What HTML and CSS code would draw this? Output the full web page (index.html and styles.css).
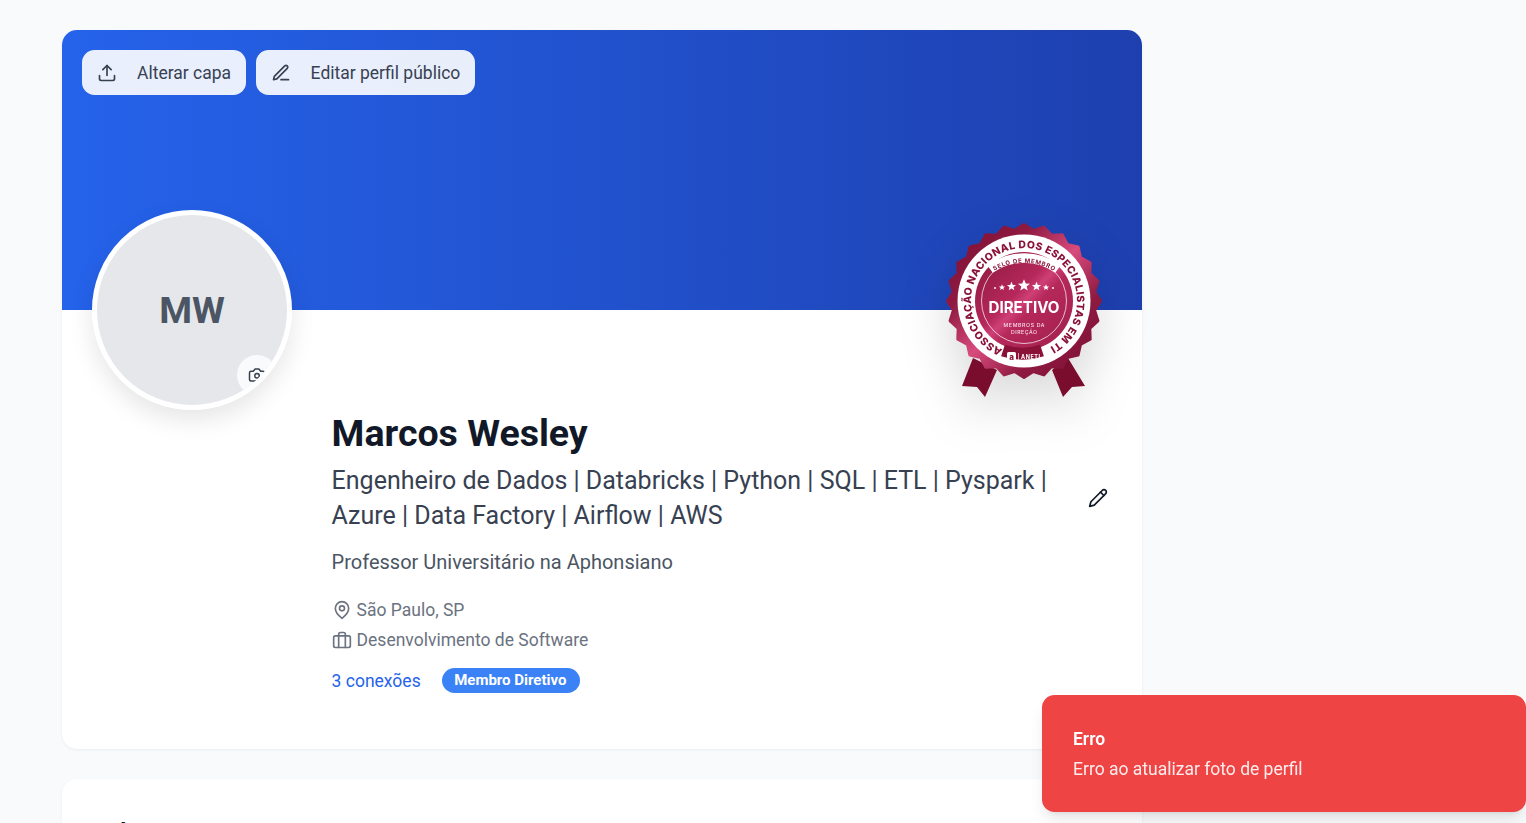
FILE: index.html
```html
<!DOCTYPE html>
<html lang="pt-BR">
<head>
<meta charset="utf-8">
<title>Marcos Wesley</title>
<link rel="stylesheet" href="styles.css">
</head>
<body>
<main class="page">
  <section class="card profile">
    <div class="cover">
      <div class="cover-actions">
        <button class="cover-btn">
          <svg class="icon" viewBox="0 0 24 24"><path d="M21 15v4a2 2 0 0 1-2 2H5a2 2 0 0 1-2-2v-4"/><polyline points="17 8 12 3 7 8"/><line x1="12" y1="3" x2="12" y2="15"/></svg>
          <span>Alterar capa</span>
        </button>
        <button class="cover-btn">
          <svg class="icon" viewBox="0 0 24 24"><path d="M12 20h9"/><path d="M16.5 3.5a2.12 2.12 0 0 1 3 3L7 19l-4 1 1-4Z"/></svg>
          <span>Editar perfil público</span>
        </button>
      </div>
    </div>

    <div class="avatar">
      <span class="initials">MW</span>
      <span class="avatar-cam">
        <svg class="icon cam-icon" viewBox="0 0 24 24"><path d="M14.5 4h-5L7 7H4a2 2 0 0 0-2 2v9a2 2 0 0 0 2 2h16a2 2 0 0 0 2-2V9a2 2 0 0 0-2-2h-3l-2.5-3z"/><circle cx="12" cy="13" r="3"/></svg>
      </span>
    </div>

    <svg class="seal" viewBox="-80 -80 160 180">
      <defs>
        <linearGradient id="sheen" x1="0" y1="0" x2="1" y2="1">
          <stop offset="0" stop-color="#7a0e31"/>
          <stop offset=".28" stop-color="#8f1a41"/>
          <stop offset=".5" stop-color="#d84b7d"/>
          <stop offset=".72" stop-color="#8f1a41"/>
          <stop offset="1" stop-color="#7a0e31"/>
        </linearGradient>
        <linearGradient id="disc" x1="0" y1="0" x2="1" y2="1">
          <stop offset="0" stop-color="#8a173d"/>
          <stop offset=".42" stop-color="#b5285a"/>
          <stop offset=".5" stop-color="#cf4076"/>
          <stop offset=".58" stop-color="#b5285a"/>
          <stop offset="1" stop-color="#a01f4c"/>
        </linearGradient>
        <path id="ringPath" d="M-21.6 48.4A53 53 0 1 1 24.9 46.8"/>
        <path id="seloPath" d="M-31.5 -32A58 58 0 0 1 31.5 -32"/>
        <polygon id="star" points="0,-5 1.4,-1.7 4.8,-1.5 2.1,.7 3,4 0,2.1 -3,4 -2.1,.7 -4.8,-1.5 -1.4,-1.7"/>
      </defs>
      <polygon class="tail" points="-51,54 -27,66 -39,93 -47,83 -62,82"/>
      <polygon class="tail" points="44,54 28,66 39,93 48,83 61,82"/>
      <g class="seal-body">
        <polygon class="rim" points="76.5,0 70.6,9.3 73.9,19.8 65.8,27.3 66.2,38.2 56.5,43.3 54.1,54.1 43.3,56.5 38.2,66.2 27.3,65.8 19.8,73.9 9.3,70.6 0,76.5 -9.3,70.6 -19.8,73.9 -27.3,65.8 -38.2,66.2 -43.3,56.5 -54.1,54.1 -56.5,43.3 -66.2,38.2 -65.8,27.3 -73.9,19.8 -70.6,9.3 -76.5,0 -70.6,-9.3 -73.9,-19.8 -65.8,-27.3 -66.2,-38.2 -56.5,-43.3 -54.1,-54.1 -43.3,-56.5 -38.2,-66.2 -27.3,-65.8 -19.8,-73.9 -9.3,-70.6 0,-76.5 9.3,-70.6 19.8,-73.9 27.3,-65.8 38.2,-66.2 43.3,-56.5 54.1,-54.1 56.5,-43.3 66.2,-38.2 65.8,-27.3 73.9,-19.8 70.6,-9.3"/>
        <circle class="ring" r="66.5"/>
        <circle class="disc" r="49"/>
        <circle class="disc-line" r="42.5"/>
        <text class="ring-text"><textPath href="#ringPath" textLength="283" lengthAdjust="spacing">ASSOCIAÇÃO NACIONAL DOS ESPECIALISTAS EM TI</textPath></text>
      </g>
      <path class="selo-band" d="M-34 -35A58 58 0 0 1 34 -35"/>
      <text class="selo-text"><textPath href="#seloPath" textLength="62" lengthAdjust="spacing" startOffset="2.3">SELO DE MEMBRO</textPath></text>
      <use href="#star" class="star" transform="translate(0 -18.5) scale(1.25)"/>
      <use href="#star" class="star" transform="translate(-12.5 -17.5) scale(.95)"/>
      <use href="#star" class="star" transform="translate(12.5 -17.5) scale(.95)"/>
      <use href="#star" class="star" transform="translate(-22 -16.5) scale(.65)"/>
      <use href="#star" class="star" transform="translate(22 -16.5) scale(.65)"/>
      <circle class="star" cx="-29" cy="-16" r=".9"/>
      <circle class="star" cx="29" cy="-16" r=".9"/>
      <text class="seal-title" text-anchor="middle" y="9" textLength="71" lengthAdjust="spacingAndGlyphs">DIRETIVO</text>
      <text class="seal-small" text-anchor="middle" y="23" textLength="41" lengthAdjust="spacing">MEMBROS DA</text>
      <text class="seal-small" text-anchor="middle" y="30" textLength="26" lengthAdjust="spacing">DIREÇÃO</text>
      <path class="logo-band" d="M-21 46.5Q-1.5 53 18 46.5"/>
      <rect class="logo-mark" x="-17" y="48" width="9" height="9" rx="1.5"/>
      <text class="logo-a" x="-12.5" y="55.5" text-anchor="middle">a</text>
      <rect class="logo-mark" x="-5.6" y="49" width=".6" height="7"/>
      <text class="logo-text" x="-3" y="54.5" textLength="19" lengthAdjust="spacing">ANETI</text>
    </svg>

    <div class="info">
      <h1 class="name">Marcos Wesley</h1>
      <div class="headline-row">
        <p class="headline">Engenheiro de Dados | Databricks | Python | SQL | ETL | Pyspark | Azure | Data Factory | Airflow | AWS</p>
        <svg class="icon edit-icon" viewBox="0 0 24 24"><path d="M17 3a2.85 2.83 0 1 1 4 4L7.5 20.5 2 22l1.5-5.5Z"/><path d="m15 5 4 4"/></svg>
      </div>
      <p class="role">Professor Universitário na Aphonsiano</p>
      <ul class="meta">
        <li class="meta-item">
          <svg class="icon meta-icon" viewBox="0 0 24 24"><path d="M20 10c0 6-8 12-8 12s-8-6-8-12a8 8 0 0 1 16 0Z"/><circle cx="12" cy="10" r="3"/></svg>
          <span>São Paulo, SP</span>
        </li>
        <li class="meta-item">
          <svg class="icon meta-icon" viewBox="0 0 24 24"><rect x="2" y="7" width="20" height="14" rx="2"/><path d="M16 21V5a2 2 0 0 0-2-2h-4a2 2 0 0 0-2 2v16"/></svg>
          <span>Desenvolvimento de Software</span>
        </li>
      </ul>
      <div class="links">
        <a class="connections" href="#">3 conexões</a>
        <span class="pill">Membro Diretivo</span>
      </div>
    </div>
  </section>

  <section class="card about">
    <h2 class="about-title">Sobre</h2>
  </section>
</main>

<aside class="toast">
  <strong class="toast-title">Erro</strong>
  <span class="toast-text">Erro ao atualizar foto de perfil</span>
</aside>
</body>
</html>
```

FILE: styles.css
```css
* { box-sizing: border-box; }

html, body {
  margin: 0;
  height: 823px;
  overflow: hidden;
  background: #f9fafb;
  font-family: Roboto, "Liberation Sans", sans-serif;
}

.page {
  width: 1080px;
  margin-left: 62px;
  padding-top: 30px;
  display: flex;
  flex-direction: column;
  gap: 30px;
}

.card {
  background: #fff;
  border-radius: 15px;
  box-shadow: 0 1px 3px rgba(0, 0, 0, .06);
}

.profile { position: relative; }

.cover {
  height: 280px;
  padding: 20px;
  border-radius: 15px 15px 0 0;
  background: linear-gradient(to right, #2563eb, #1e40af);
}

.cover-actions { display: flex; gap: 10px; }

.cover-btn {
  display: flex;
  align-items: center;
  gap: 20px;
  height: 45px;
  padding: 0 14.5px 0 15px;
  border: 0;
  border-radius: 12.5px;
  background: rgba(255, 255, 255, .9);
  color: #374151;
  font: 400 17.5px Roboto, sans-serif;
}

.icon {
  flex: none;
  width: 20px;
  height: 20px;
  fill: none;
  stroke: currentColor;
  stroke-width: 2;
  stroke-linecap: round;
  stroke-linejoin: round;
}

.avatar {
  position: absolute;
  left: 30px;
  top: 180px;
  width: 200px;
  height: 200px;
  border: 5px solid #fff;
  border-radius: 50%;
  overflow: hidden;
  background: #e5e7eb;
  display: flex;
  align-items: center;
  justify-content: center;
}

.profile::before {
  content: "";
  position: absolute;
  left: 30px;
  top: 180px;
  width: 200px;
  height: 200px;
  border-radius: 50%;
  box-shadow: 0 10px 25px rgba(0, 0, 0, .1);
}

.initials {
  color: #4b5563;
  font-size: 37.5px;
  font-weight: 700;
}

.avatar-cam {
  position: absolute;
  left: 140px;
  top: 140px;
  width: 40px;
  height: 40px;
  border-radius: 50%;
  background: #f9fafb;
  color: #374151;
  display: flex;
  align-items: center;
  justify-content: center;
}

.cam-icon { width: 18px; height: 18px; }

.seal {
  position: absolute;
  left: 882px;
  top: 194px;
  width: 160px;
  height: 180px;
  overflow: visible;
  filter: blur(.3px) drop-shadow(0 20px 25px rgba(0, 0, 0, .15));
}

.seal-body { transform: translateY(-3px); }
.tail { fill: #7a0c2e; }
.rim { fill: url(#sheen); stroke: url(#sheen); stroke-width: 3; stroke-linejoin: round; }
.ring { fill: #fff; }
.disc { fill: url(#disc); }
.disc-line { fill: none; stroke: #fff; stroke-width: .7; }
.ring-text { fill: #8a1238; font: 800 10.4px Inter, "Open Sans", sans-serif; }
.selo-band { fill: none; stroke: #fff; stroke-width: 9.5; }
.selo-text { fill: #8a1238; font: 700 6px Inter, "Open Sans", sans-serif; }
.star { fill: #fff; }
.seal-title { fill: #fff; font: 700 15.5px Inter, "Open Sans", sans-serif; }
.seal-small { fill: #fbdde8; font: 500 5.2px Inter, "Open Sans", sans-serif; }
.logo-band { fill: none; stroke: #8a1238; stroke-width: 12; }
.logo-mark { fill: #fff; }
.logo-a { fill: #8a1238; font: 800 8px Inter, sans-serif; }
.logo-text { fill: #fff; font: 700 5.5px Inter, sans-serif; }

.info { padding: 101px 32px 56px 269.6px; }

.name {
  margin: 0;
  color: #111827;
  font-size: 37.5px;
  line-height: 45px;
  font-weight: 700;
}

.headline-row {
  display: flex;
  align-items: center;
  gap: 40px;
  margin-top: 6.5px;
}

.headline {
  flex: 1;
  margin: 0;
  color: #374151;
  font-size: 25px;
  line-height: 35px;
}

.edit-icon { color: #111827; margin-right: 2px; }

.role {
  margin: 15.5px 0 0;
  color: #4b5563;
  font-size: 20px;
  line-height: 28px;
}

.meta {
  list-style: none;
  margin: 19px 0 0;
  padding: 0;
}

.meta-item {
  display: flex;
  align-items: center;
  gap: 5px;
  height: 30px;
  color: #6b7280;
  font-size: 17.5px;
}

.links {
  display: flex;
  align-items: center;
  gap: 21px;
  margin-top: 13px;
  height: 25px;
}

.connections {
  color: #2563eb;
  font-size: 17.5px;
  text-decoration: none;
}

.pill {
  display: flex;
  align-items: center;
  height: 25px;
  padding: 0 13.5px 1px 12.5px;
  border-radius: 12.5px;
  background: #3b82f6;
  color: #fff;
  font-size: 15px;
  font-weight: 700;
}

.about { height: 200px; padding: 36.5px 30px; }

.about-title {
  margin: 0;
  color: #111827;
  font-size: 24px;
  line-height: 32px;
  font-weight: 700;
}

.toast {
  position: fixed;
  right: 0;
  bottom: 11px;
  width: 484px;
  height: 117px;
  padding: 0 31px;
  border-radius: 12.5px;
  background: #ef4444;
  box-shadow: 0 10px 15px -3px rgba(0, 0, 0, .1), 0 4px 6px -4px rgba(0, 0, 0, .1);
  display: flex;
  flex-direction: column;
  justify-content: center;
  gap: 8px;
}

.toast-title { color: #fff; font-size: 17.5px; line-height: 22px; font-weight: 600; }
.toast-text { color: rgba(255, 255, 255, .9); font-size: 17.5px; line-height: 22px; }
```
